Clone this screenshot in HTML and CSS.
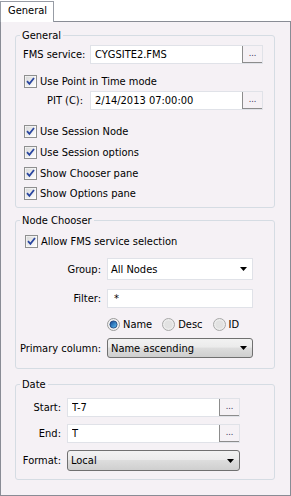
FILE: index.html
```html
<!DOCTYPE html>
<html lang="en">
<head>
  <meta charset="UTF-8">
  <title>General</title>
  <link rel="stylesheet" href="styles.css">
</head>
<body>
  <svg class="defs" width="0" height="0">
    <defs>
      <linearGradient id="box-fill" x1="0" y1="0" x2="1" y2="1">
        <stop offset="0" stop-color="#d8d8d8"/>
        <stop offset="1" stop-color="#ffffff"/>
      </linearGradient>
      <linearGradient id="dot-fill" x1="0" y1="0" x2="1" y2="1">
        <stop offset="0" stop-color="#0b3f8f"/>
        <stop offset="1" stop-color="#63c6f7"/>
      </linearGradient>
    </defs>
  </svg>

  <div class="tabs">
    <div class="tab">General</div>
    <div class="tab-fill"></div>
  </div>

  <div class="panel">
    <fieldset class="group group-general">
      <legend>General</legend>
      <div class="row first">
        <span class="label wide">FMS service:</span>
        <div class="field"><input type="text" value="CYGSITE2.FMS" readonly><button class="browse">...</button></div>
      </div>
      <label class="check mt10">
        <svg class="box" width="13" height="13" viewBox="0 0 13 13"><rect x="0.5" y="0.5" width="12" height="12" fill="#fff" stroke="#8e8f8f"/><rect x="1.5" y="1.5" width="10" height="10" fill="url(#box-fill)"/><path d="M3 6.2 L5.4 8.8 L10 3" fill="none" stroke="#2a46a0" stroke-width="1.8"/></svg>
        Use Point in Time mode
      </label>
      <div class="row mt3">
        <span class="label wide indent">PIT (C):</span>
        <div class="field"><input type="text" value="2/14/2013 07:00:00" readonly><button class="browse">...</button></div>
      </div>
      <label class="check mt14">
        <svg class="box" width="13" height="13" viewBox="0 0 13 13"><rect x="0.5" y="0.5" width="12" height="12" fill="#fff" stroke="#8e8f8f"/><rect x="1.5" y="1.5" width="10" height="10" fill="url(#box-fill)"/><path d="M3 6.2 L5.4 8.8 L10 3" fill="none" stroke="#2a46a0" stroke-width="1.8"/></svg>
        Use Session Node
      </label>
      <label class="check mt7">
        <svg class="box" width="13" height="13" viewBox="0 0 13 13"><rect x="0.5" y="0.5" width="12" height="12" fill="#fff" stroke="#8e8f8f"/><rect x="1.5" y="1.5" width="10" height="10" fill="url(#box-fill)"/><path d="M3 6.2 L5.4 8.8 L10 3" fill="none" stroke="#2a46a0" stroke-width="1.8"/></svg>
        Use Session options
      </label>
      <label class="check mt7">
        <svg class="box" width="13" height="13" viewBox="0 0 13 13"><rect x="0.5" y="0.5" width="12" height="12" fill="#fff" stroke="#8e8f8f"/><rect x="1.5" y="1.5" width="10" height="10" fill="url(#box-fill)"/><path d="M3 6.2 L5.4 8.8 L10 3" fill="none" stroke="#2a46a0" stroke-width="1.8"/></svg>
        Show Chooser pane
      </label>
      <label class="check mt6">
        <svg class="box" width="13" height="13" viewBox="0 0 13 13"><rect x="0.5" y="0.5" width="12" height="12" fill="#fff" stroke="#8e8f8f"/><rect x="1.5" y="1.5" width="10" height="10" fill="url(#box-fill)"/><path d="M3 6.2 L5.4 8.8 L10 3" fill="none" stroke="#2a46a0" stroke-width="1.8"/></svg>
        Show Options pane
      </label>
    </fieldset>

    <fieldset class="group group-chooser">
      <legend>Node Chooser</legend>
      <label class="check mt7 shift">
        <svg class="box" width="13" height="13" viewBox="0 0 13 13"><rect x="0.5" y="0.5" width="12" height="12" fill="#fff" stroke="#8e8f8f"/><rect x="1.5" y="1.5" width="10" height="10" fill="url(#box-fill)"/><path d="M3 6.2 L5.4 8.8 L10 3" fill="none" stroke="#2a46a0" stroke-width="1.8"/></svg>
        Allow FMS service selection
      </label>
      <div class="row mt10">
        <span class="label">Group:</span>
        <div class="select plain tall"><span>All Nodes</span><svg class="arrow" width="7" height="4" viewBox="0 0 7 4"><polygon points="0,0 7,0 3.5,4" fill="#000"/></svg></div>
      </div>
      <div class="row mt9">
        <span class="label">Filter:</span>
        <div class="field"><input type="text" value="*" readonly></div>
      </div>
      <div class="row radios mt9">
        <span class="radio">
          <svg width="13" height="13" viewBox="0 0 13 13"><circle cx="6.5" cy="6.5" r="6" fill="#f2f2f2" stroke="#9a9a9a"/><circle cx="6.5" cy="6.5" r="3.6" fill="url(#dot-fill)" stroke="#1b3d74" stroke-width="0.8"/></svg>
          Name
        </span>
        <span class="radio">
          <svg width="13" height="13" viewBox="0 0 13 13"><circle cx="6.5" cy="6.5" r="6" fill="#ececec" stroke="#a8a8a8"/><circle cx="6.5" cy="6.5" r="4" fill="#e2e2e2"/></svg>
          Desc
        </span>
        <span class="radio">
          <svg width="13" height="13" viewBox="0 0 13 13"><circle cx="6.5" cy="6.5" r="6" fill="#ececec" stroke="#a8a8a8"/><circle cx="6.5" cy="6.5" r="4" fill="#e2e2e2"/></svg>
          ID
        </span>
      </div>
      <div class="row mt7">
        <span class="label">Primary column:</span>
        <div class="select raised"><span>Name ascending</span><svg class="arrow" width="7" height="4" viewBox="0 0 7 4"><polygon points="0,0 7,0 3.5,4" fill="#000"/></svg></div>
      </div>
    </fieldset>

    <fieldset class="group group-date">
      <legend>Date</legend>
      <div class="row mt7">
        <span class="label">Start:</span>
        <div class="field"><input type="text" value="T-7" readonly><button class="browse">...</button></div>
      </div>
      <div class="row mt7">
        <span class="label">End:</span>
        <div class="field"><input type="text" value="T" readonly><button class="browse">...</button></div>
      </div>
      <div class="row mt7">
        <span class="label">Format:</span>
        <div class="select raised format"><span>Local</span><svg class="arrow" width="7" height="4" viewBox="0 0 7 4"><polygon points="0,0 7,0 3.5,4" fill="#000"/></svg></div>
      </div>
    </fieldset>
  </div>
</body>
</html>
```

FILE: styles.css
```css
* {
  box-sizing: border-box;
}

body {
  margin: 0;
  width: 291px;
  height: 496px;
  background: #fff;
  color: #000;
  font-family: "DejaVu Sans Condensed", "DejaVu Sans", sans-serif;
  font-size: 11px;
  line-height: 13px;
}

.defs {
  position: absolute;
}

/* Tab strip */
.tabs {
  display: flex;
  margin-top: 1px;
  height: 21px;
}

.tab {
  width: 54px;
  height: 21px;
  padding: 2px 0 0 7px;
  border: 1px solid #979ca5;
  border-bottom: none;
  background: #fff;
}

.tab-fill {
  flex: 1;
  border-bottom: 1px solid #898c95;
}

.panel {
  height: 474px;
  padding-top: 7px;
  border: 1px solid #898c95;
  border-top: none;
  background: #f5f1f5;
}

/* Group boxes */
.group {
  margin: 0 15px 0 14px;
  padding: 0 11px 7px 7px;
  min-width: 0;
  border: 1px solid #d5dce3;
  border-radius: 3px;
}

.group legend {
  margin-left: -3px;
  padding: 0 2px;
  line-height: 13px;
}

.group-chooser {
  margin-top: 6px;
  padding-right: 21px;
  padding-bottom: 10px;
}

.group-date {
  margin-top: 9px;
  padding-right: 34px;
  padding-bottom: 8px;
}

.row {
  display: flex;
  align-items: center;
}

.first { margin-top: 3px; }
.mt3 { margin-top: 3px; }
.mt6 { margin-top: 6px; }
.mt7 { margin-top: 7px; }
.mt9 { margin-top: 9px; }
.mt10 { margin-top: 10px; }
.mt14 { margin-top: 14px; }

.label {
  flex-shrink: 0;
  display: flex;
  justify-content: flex-end;
  width: 78px;
  margin-right: 6px;
  white-space: nowrap;
}

.group-date .label {
  width: 38px;
}

.label.wide {
  justify-content: flex-start;
  width: 67px;
  margin-right: 0;
}

.label.indent {
  padding-left: 24px;
}

/* Text boxes */
.field {
  flex: 1;
  display: flex;
  height: 19px;
  border: 1px solid #e0e2e8;
  background: #fff;
}

.field input {
  flex: 1;
  min-width: 0;
  padding: 0 0 0 4px;
  border: none;
  outline: none;
  background: transparent;
  color: #000;
  font: inherit;
}

.group-chooser .field input {
  padding-left: 6px;
}

.browse {
  width: 20px;
  padding: 0 0 3px;
  border: none;
  border-left: 1px solid #8c8c8c;
  border-bottom: 1px solid #8c8c8c;
  background: #f5f1f5;
  color: #3a2a5a;
  font-family: inherit;
  font-size: 9px;
  line-height: 10px;
}

/* Drop-down lists */
.select {
  flex: 1;
  display: flex;
  align-items: center;
  justify-content: space-between;
  height: 20px;
  padding: 0 5px 0 3px;
}

.select.plain {
  border: 1px solid #e0e2e8;
  background: #fff;
}

.select.tall {
  height: 22px;
}

.select.raised {
  border: 1px solid #707070;
  border-radius: 3px;
  background: linear-gradient(#f2f2f2, #ebebeb 45%, #dddddd 50%, #cfcfcf);
}

.select.format {
  height: 21px;
}

.arrow {
  flex-shrink: 0;
}

/* Check boxes and radio buttons */
.check {
  display: flex;
  align-items: center;
  gap: 3px;
  height: 14px;
  margin-left: 1px;
}

.check.shift {
  margin-left: 2px;
}

.radios {
  height: 14px;
  padding-left: 84px;
  gap: 10px;
}

.radio {
  display: flex;
  align-items: center;
  gap: 3px;
}
```
